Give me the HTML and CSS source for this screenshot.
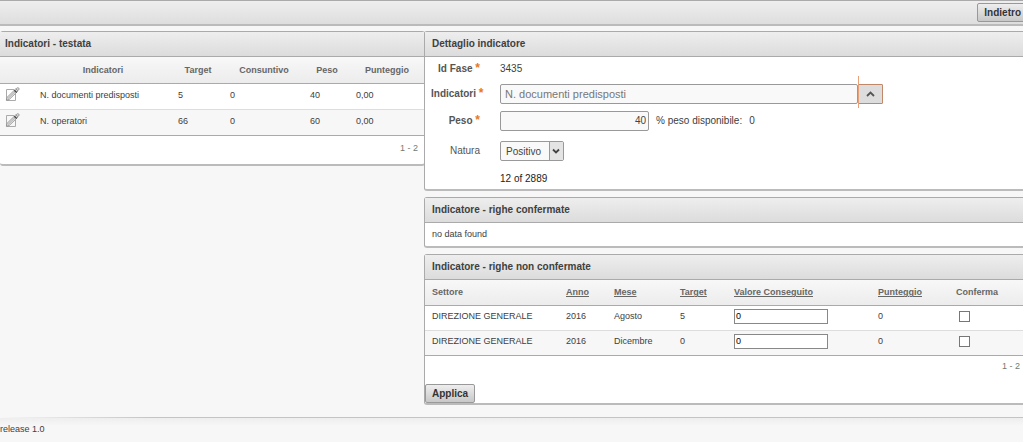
FILE: index.html
```
<!DOCTYPE html>
<html lang="it">
<head>
<meta charset="utf-8">
<title>Dettaglio indicatore</title>
<link rel="stylesheet" href="styles.css">
</head>
<body>
<header class="topbar"><button class="btn btn-back" type="button">Indietro</button></header>
<main class="layout">
  <section class="panel panel-list">
    <h2 class="panel-title">Indicatori - testata</h2>
    <table class="grid grid-list">
      <colgroup><col class="l-edit"><col class="l-name"><col class="l-target"><col class="l-cons"><col class="l-peso"><col></colgroup>
      <thead><tr><th></th><th>Indicatori</th><th>Target</th><th>Consuntivo</th><th>Peso</th><th>Punteggio</th></tr></thead>
      <tbody>
        <tr><td class="edit-cell"><a class="edit" href="#" aria-label="Modifica"><svg width="15" height="15" viewBox="0 0 15 15" fill="none"><path d="M9 2.5H1.5V13.5H10.500V7" stroke="#aaa"/><path d="M1.300 13.200L2 10.400L10.800 1.800L13 4L4.200 12.500Z" fill="#e4e4e4" stroke="#888" stroke-width=".8"/><path d="M3 11.500L10.500 4.200" stroke="#999" stroke-width=".8"/><path d="M9.300 3.200L11.700 5.500" stroke="#444" stroke-width="1.500"/><circle cx="12.800" cy="2" r="1.300" fill="#eee" stroke="#888" stroke-width=".8"/></svg></a></td><td>N. documenti predisposti</td><td>5</td><td>0</td><td>40</td><td>0,00</td></tr>
        <tr><td class="edit-cell"><a class="edit" href="#" aria-label="Modifica"><svg width="15" height="15" viewBox="0 0 15 15" fill="none"><path d="M9 2.5H1.5V13.5H10.500V7" stroke="#aaa"/><path d="M1.300 13.200L2 10.400L10.800 1.800L13 4L4.200 12.500Z" fill="#e4e4e4" stroke="#888" stroke-width=".8"/><path d="M3 11.500L10.500 4.200" stroke="#999" stroke-width=".8"/><path d="M9.300 3.200L11.700 5.500" stroke="#444" stroke-width="1.500"/><circle cx="12.800" cy="2" r="1.300" fill="#eee" stroke="#888" stroke-width=".8"/></svg></a></td><td>N. operatori</td><td>66</td><td>0</td><td>60</td><td>0,00</td></tr>
      </tbody>
    </table>
    <p class="pager">1 - 2</p>
  </section>
  <div class="details">
    <section class="panel">
      <h2 class="panel-title">Dettaglio indicatore</h2>
      <form class="form">
        <span class="label required">Id Fase <i class="star">*</i></span>
        <span class="value">3435</span>
        <label class="label required" for="ind">Indicatori <i class="star">*</i></label>
        <div class="combo"><input class="field combo-text" id="ind" type="text" value="N. documenti predisposti"><button class="combo-btn" type="button" aria-label="Apri elenco"><svg width="9" height="6" viewBox="0 0 9 6" fill="none"><path d="M1 5L4.500 1.500L8 5" stroke="#555" stroke-width="1.800"/></svg></button></div>
        <label class="label required" for="peso">Peso <i class="star">*</i></label>
        <div class="peso-row"><input class="field peso" id="peso" type="text" value="40"><span>% peso disponibile:</span><span>0</span></div>
        <label class="label" for="natura">Natura</label>
        <div class="select-wrap"><select class="field select" id="natura"><option>Positivo</option></select><svg class="select-arrow" viewBox="0 0 14 18" fill="none"><path d="M0 0H14V18H0Z" fill="#e4e4e4"/><path d="M.5 0V18" stroke="#999"/><path d="M4 7.500L7 10.500L10 7.500" stroke="#444" stroke-width="1.800"/></svg></div>
        <span class="count">12 of 2889</span>
      </form>
    </section>
    <section class="panel">
      <h2 class="panel-title">Indicatore - righe confermate</h2>
      <p class="empty">no data found</p>
    </section>
    <section class="panel">
      <h2 class="panel-title">Indicatore - righe non confermate</h2>
      <table class="grid grid-rows">
        <colgroup><col class="r-sett"><col class="r-anno"><col class="r-mese"><col class="r-target"><col class="r-val"><col class="r-punt"><col></colgroup>
        <thead><tr><th>Settore</th><th><a href="#">Anno</a></th><th><a href="#">Mese</a></th><th><a href="#">Target</a></th><th><a href="#">Valore Conseguito</a></th><th><a href="#">Punteggio</a></th><th>Conferma</th></tr></thead>
        <tbody>
          <tr><td>DIREZIONE GENERALE</td><td>2016</td><td>Agosto</td><td>5</td><td><input class="cell-input" type="text" value="0" aria-label="Valore Conseguito Agosto"></td><td>0</td><td><input class="check" type="checkbox" aria-label="Conferma Agosto"></td></tr>
          <tr><td>DIREZIONE GENERALE</td><td>2016</td><td>Dicembre</td><td>0</td><td><input class="cell-input" type="text" value="0" aria-label="Valore Conseguito Dicembre"></td><td>0</td><td><input class="check" type="checkbox" aria-label="Conferma Dicembre"></td></tr>
        </tbody>
      </table>
      <p class="pager">1 - 2</p>
      <button class="btn btn-apply" type="button">Applica</button>
    </section>
  </div>
</main>
<footer class="footer">release 1.0</footer>
</body>
</html>
```
FILE: styles.css
```
* { box-sizing: border-box; }
body {
  margin: 0;
  background: #f7f7f7;
  color: #404040;
  font: 9px/12px "Liberation Sans", Arial, sans-serif;
  overflow-x: hidden;
}
input, select, button { font-family: inherit; margin: 0; }
h2, p { margin: 0; }
a { color: inherit; }

.topbar {
  display: flex;
  justify-content: flex-end;
  height: 26px;
  padding-top: 2px;
  border-top: 1px solid #aaa;
  border-bottom: 2px solid #bbb;
  background: linear-gradient(#eee, #dedede);
}
.btn {
  display: block;
  height: 19px;
  padding: 0 6px;
  border: 1px solid #999;
  border-radius: 2px;
  background: linear-gradient(#eee, #c8c8c8);
  color: #333;
  font-size: 10px;
  font-weight: bold;
}
.btn-back { margin-right: -5px; }

.layout {
  display: grid;
  grid-template-columns: 425fr 598fr;
  align-items: start;
  padding-top: 5px;
}
.details { display: grid; gap: 6px; margin: 0 -4px 0 -1px; }
.panel {
  border: 1px solid #aaa;
  border-bottom: 2px solid #bbb;
  border-radius: 3px;
  background: #fff;
}
.panel-list { border-left: 0; }
.panel-title {
  height: 25px;
  padding-left: 5px;
  border-bottom: 1px solid #aaa;
  background: linear-gradient(#eee, #dcdcdc);
  font-size: 10px;
  line-height: 24px;
}
.details .panel-title { padding-left: 7px; }

.grid { width: 100%; table-layout: fixed; border-collapse: collapse; }
.grid th {
  height: 26px;
  padding: 0 6px;
  background: linear-gradient(#f8f8f8, #ececec);
  border-bottom: 1px solid #aaa;
  color: #666;
  white-space: nowrap;
}
.grid td { height: 26px; padding: 0 6px 2px; border-bottom: 1px solid #ddd; }
.grid tbody tr:nth-child(2) td { background: #f7f7f7; border-bottom-color: #aaa; }
.l-edit { width: 34px; }
.l-name { width: 138px; }
.l-target { width: 52px; }
.l-cons { width: 80px; }
.l-peso { width: 46px; }
.r-sett { width: 134px; }
.r-anno { width: 48px; }
.r-mese { width: 66px; }
.r-target { width: 54px; }
.r-val { width: 144px; }
.r-punt { width: 78px; }
.grid-rows th { height: 25px; padding: 0 7px; text-align: left; }
.grid-rows td { height: 25px; padding: 0 7px 3px; }
.grid .edit-cell { padding: 0 5px 3px; }
.edit svg { display: block; }
.pager { height: 28px; padding: 6px 6px 0; color: #777; text-align: right; }
.details .pager { padding-top: 4px; }

.form {
  display: grid;
  grid-template-columns: 50px 1fr;
  grid-template-rows: 24px 26px 27px 34px 21px;
  column-gap: 19px;
  align-items: center;
  padding-left: 6px;
  font-size: 10px;
}
.label { color: #555; text-align: right; white-space: nowrap; padding-right: 1px; }
.required { font-weight: bold; }
.star { color: #e87722; font-style: normal; font-size: 12px; line-height: 10px; }
.count { grid-column: 2; color: #222; }
.field {
  height: 20px;
  border: 1px solid #999;
  border-radius: 2px;
  background: #f9f9f9;
  color: #444;
}
.combo { display: flex; width: 383px; position: relative; }
.combo-text { flex: 1; padding: 0 4px; font-size: 11px; color: #777; }
.combo-btn {
  width: 25px;
  padding: 0;
  border: 1px solid #c08868;
  border-radius: 1px;
  background: #ddd;
}
.combo-btn svg { display: block; margin: auto; }
.combo::after {
  content: "";
  position: absolute;
  top: -8px;
  bottom: -4px;
  right: 24px;
  width: 1px;
  background: #e8a078;
}
.peso-row { display: flex; align-items: center; gap: 7px; }
.peso { width: 149px; padding: 0 2px; font-size: 10px; text-align: right; }
.select-wrap { position: relative; width: 64px; }
.select { display: block; width: 100%; padding: 0 5px; appearance: none; font-size: 10px; }
.select-arrow { position: absolute; top: 1px; right: 1px; width: 14px; height: 18px; pointer-events: none; }
.empty { padding: 5px 7px 6px; }
.cell-input {
  display: block;
  width: 94px;
  height: 15px;
  padding: 0 1px;
  border: 1px solid #888;
  background: #fff;
  font-size: 9px;
}
.check {
  appearance: none;
  display: block;
  width: 11px;
  height: 11px;
  margin-left: 3px;
  border: 1px solid #777;
  background: #fff;
}
.footer {
  margin-top: 12px;
  padding-top: 5px;
  border-top: 1px solid #ccc;
  border-image: linear-gradient(90deg, #f7f7f7, #c4c4c4 15%) 1;
  background: linear-gradient(#eee, #f7f7f7 8px);
}
```
